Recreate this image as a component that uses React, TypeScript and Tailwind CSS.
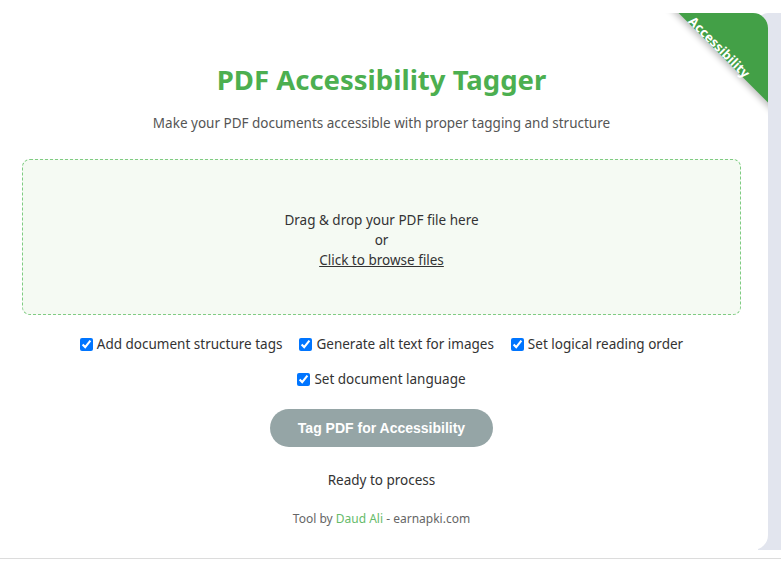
import React, { useState } from 'react';

const options = [
  'Add document structure tags',
  'Generate alt text for images',
  'Set logical reading order',
  'Set document language',
];

export default function App() {
  const [checked, setChecked] = useState<boolean[]>(options.map(() => true));

  const toggle = (i: number) => {
    setChecked((prev) => prev.map((v, idx) => (idx === i ? !v : v)));
  };

  return (
    <div className="w-[781px] h-[563px] bg-white overflow-hidden font-['Noto_Sans',sans-serif] text-[#333]">
      <div className="flex pt-[13px] h-[550px]">
        {/* Card */}
        <div className="relative z-10 w-[768px] shrink-0 bg-white rounded-r-[15px] overflow-hidden pl-[22px] pr-[27px]">
          {/* Corner ribbon */}
          <div className="absolute left-[635px] top-[-16px] w-[200px] h-[60px] rotate-45 bg-[#43a047] shadow-[0_3px_6px_rgba(0,0,0,0.25)] flex items-end justify-center">
            <span className="text-white font-bold text-[13px] leading-[15px] translate-x-[3px] translate-y-[3px]">Accessibility</span>
          </div>

          <h1 className="mt-[47px] text-center text-[27.5px] leading-[40px] font-bold text-[#4caf50]">
            PDF Accessibility Tagger
          </h1>
          <p className="mt-[13px] text-center text-[13.5px] leading-[20px] text-[#555]">
            Make your PDF documents accessible with proper tagging and structure
          </p>

          {/* Drop zone */}
          <div className="mt-[26px] h-[156px] pt-[6px] rounded-[8px] border border-dashed border-[#7fcc82] bg-[#f5faf3] flex flex-col items-center justify-center text-[13.5px] leading-[20px] text-[#333]">
            <p>Drag &amp; drop your PDF file here</p>
            <p>or</p>
            <p className="underline cursor-pointer">Click to browse files</p>
          </div>

          {/* Options */}
          <div className="mt-[19px] flex flex-wrap justify-center gap-x-[17px] gap-y-[15px] px-[40px] text-[13.5px] leading-[20px]">
            {options.map((label, i) => (
              <label key={label} className="flex items-center cursor-pointer">
                <input
                  type="checkbox"
                  checked={checked[i]}
                  onChange={() => toggle(i)}
                  className="w-[13px] h-[13px] mr-[4px] accent-[#0075ff]"
                />
                {label}
              </label>
            ))}
          </div>

          <div className="mt-[20px] flex justify-center">
            <button className="h-[38px] px-[28px] rounded-full bg-[#95a5a6] text-white font-bold text-[14px] font-['Liberation_Sans',Arial,sans-serif]">
              Tag PDF for Accessibility
            </button>
          </div>

          <p className="mt-[23px] text-center text-[13.5px] leading-[20px] text-[#333]">Ready to process</p>

          <p className="mt-[21px] text-center text-[12px] leading-[16px] text-[#666]">
            Tool by <span className="text-[#66bb6a]">Daud Ali</span> - earnapki.com
          </p>
        </div>

        {/* Side strip */}
        <div className="flex-1 -ml-[10px] rounded-tl-[10px] bg-[#e2e5ee]" />
      </div>
      <div className="mt-[8px] h-[1px] bg-[#dcdcdc]" />
    </div>
  );
}
